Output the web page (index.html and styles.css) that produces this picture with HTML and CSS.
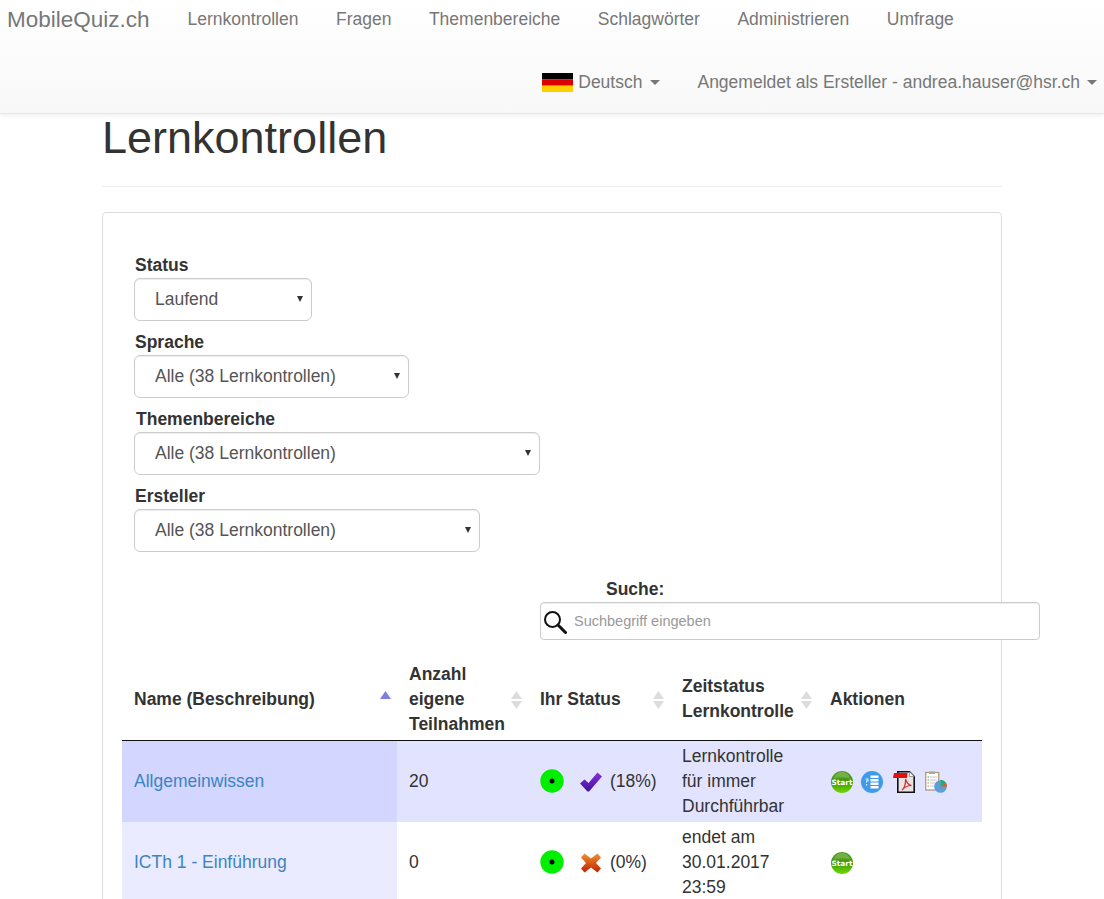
FILE: index.html
```html
<!DOCTYPE html>
<html lang="de">
<head>
<meta charset="utf-8">
<title>Lernkontrollen</title>
<link rel="stylesheet" href="styles.css">
</head>
<body>
<svg class="defs" width="0" height="0" aria-hidden="true">
  <defs>
    <linearGradient id="startGrad" x1="0" y1="0" x2="0" y2="1">
      <stop offset="0" stop-color="#5a9c28"/>
      <stop offset="0.5" stop-color="#3f9a08"/>
      <stop offset="1" stop-color="#70d800"/>
    </linearGradient>
    <linearGradient id="checkGrad" x1="0" y1="0" x2="0" y2="1">
      <stop offset="0" stop-color="#8a30d8"/>
      <stop offset="1" stop-color="#40109a"/>
    </linearGradient>
    <linearGradient id="crossGrad" x1="0" y1="0" x2="0" y2="1">
      <stop offset="0" stop-color="#f09030"/>
      <stop offset="1" stop-color="#c02000"/>
    </linearGradient>
    <symbol id="dot" viewBox="0 0 24 24">
      <circle cx="12" cy="12" r="11.7" fill="#00ee00"/>
      <circle cx="12" cy="12" r="2.5" fill="#000"/>
    </symbol>
    <symbol id="start" viewBox="0 0 22 22">
      <circle cx="11" cy="11" r="11" fill="url(#startGrad)"/>
      <path d="M3 7.500C4 3 8 1 11 1s7 2 8 6.500C15 6 7 6 3 7.500z" fill="#fff" opacity=".2"/>
      <text x="11" y="13.800" text-anchor="middle" class="start-text">Start</text>
    </symbol>
    <symbol id="sort" viewBox="0 0 11 18">
      <path d="M5.500 0L11 8H0z M0 10h11L5.500 18z" fill="#dcdcdc"/>
    </symbol>
  </defs>
</svg>

<header class="navbar">
  <nav class="nav-row">
    <a class="brand" href="#">MobileQuiz.ch</a>
    <a class="nav-link" href="#">Lernkontrollen</a>
    <a class="nav-link" href="#">Fragen</a>
    <a class="nav-link" href="#">Themenbereiche</a>
    <a class="nav-link" href="#">Schlagwörter</a>
    <a class="nav-link" href="#">Administrieren</a>
    <a class="nav-link" href="#">Umfrage</a>
  </nav>
  <nav class="nav-row nav-right">
    <a class="nav-link" href="#"><svg class="flag" viewBox="0 0 31 19" width="31" height="19"><rect width="31" height="6.400" fill="#000"/><rect y="6.400" width="31" height="6.300" fill="#dd0000"/><rect y="12.700" width="31" height="6.300" fill="#ffce00"/></svg><span>Deutsch</span><span class="caret"></span></a>
    <a class="nav-link" href="#"><span>Angemeldet als Ersteller - andrea.hauser@hsr.ch</span><span class="caret"></span></a>
  </nav>
</header>

<main class="container">
  <h1 class="page-title">Lernkontrollen</h1>
  <hr class="rule">
  <section class="card">
    <form class="filters">
      <label class="filter-label">Status</label>
      <div class="select-wrap select-status"><select class="select"><option>Laufend</option></select></div>
      <label class="filter-label">Sprache</label>
      <div class="select-wrap select-lang"><select class="select"><option>Alle (38 Lernkontrollen)</option></select></div>
      <label class="filter-label filter-label-shift">Themenbereiche</label>
      <div class="select-wrap select-topic"><select class="select"><option>Alle (38 Lernkontrollen)</option></select></div>
      <label class="filter-label">Ersteller</label>
      <div class="select-wrap select-author"><select class="select"><option>Alle (38 Lernkontrollen)</option></select></div>
    </form>

    <div class="search">
      <label class="search-label">Suche:</label>
      <div class="search-box">
        <svg class="search-icon" viewBox="0 0 24 24" width="24" height="24"><circle cx="9.500" cy="9.500" r="7.500" fill="none" stroke="#111" stroke-width="2"/><path d="M15 15l7.500 7.500" stroke="#111" stroke-width="3" stroke-linecap="round"/></svg>
        <input class="search-input" type="text" placeholder="Suchbegriff eingeben">
      </div>
    </div>

    <table class="quiz-table">
      <colgroup>
        <col class="col-name"><col class="col-count"><col class="col-status"><col class="col-time"><col class="col-actions">
      </colgroup>
      <thead>
        <tr>
          <th><div class="th-inner th-one">Name (Beschreibung)<svg class="sort-up" viewBox="0 0 11 8" width="11" height="8"><path d="M5.500 0L11 8H0z" fill="#7f7fdd"/></svg></div></th>
          <th><div class="th-inner">Anzahl<br>eigene<br>Teilnahmen<svg class="sort" width="11" height="18"><use href="#sort"/></svg></div></th>
          <th><div class="th-inner th-one">Ihr Status<svg class="sort" width="11" height="18"><use href="#sort"/></svg></div></th>
          <th><div class="th-inner th-two">Zeitstatus<br>Lernkontrolle<svg class="sort" width="11" height="18"><use href="#sort"/></svg></div></th>
          <th><div class="th-inner th-one">Aktionen</div></th>
        </tr>
      </thead>
      <tbody>
        <tr class="odd">
          <td class="sorted"><a class="link" href="#">Allgemeinwissen</a></td>
          <td>20</td>
          <td>
            <div class="status">
              <svg class="status-dot" width="24" height="24"><use href="#dot"/></svg>
              <svg class="status-mark" viewBox="0 0 22 20" width="22" height="20"><path d="M0 11.500L4.500 7.500l4 3.500L17.500 0.500l4.500 4L9 19.500H7.500z" fill="url(#checkGrad)"/></svg>
              <span>(18%)</span>
            </div>
          </td>
          <td>Lernkontrolle<br>für immer<br>Durchführbar</td>
          <td>
            <div class="actions">
              <svg class="icon" width="22" height="22"><use href="#start"/></svg>
              <svg class="icon icon-list" viewBox="0 0 22 22" width="22" height="22"><circle cx="11" cy="11" r="11" fill="#3f9ae8"/><path d="M9.500 4.500h8v2.500h-8zM9.500 8h8v2.500h-8zM9.500 11.500h8V14h-8zM9.500 15h8v2.500h-8z" fill="#fff"/><path d="M4.500 7.500h3v3H6v1H5v-2h1.500v-1h-2zM5 13h1.200v1.500H5z" fill="#e8f6ff"/></svg>
              <svg class="icon" viewBox="0 0 22 22" width="22" height="22"><path d="M4.800 0.800h11.700L21.200 5.500v15.700H4.800z" fill="#e8e4e4" stroke="#111" stroke-width="1.600"/><path d="M16.500 0.800v4.700h4.700z" fill="#fff" stroke="#888" stroke-width=".8"/><path d="M9 19c2-1 4-6 3.500-11 1 3 3 6 6 6.500-3 0-7 1.500-9.500 4.500z" fill="none" stroke="#cc3333" stroke-width="1.200"/><path d="M1 2h13.500l-.5 5H0z" fill="#e01010"/></svg>
              <svg class="icon" viewBox="0 0 22 22" width="22" height="22"><rect x="0.700" y="1.500" width="13" height="17.500" fill="#fff" stroke="#b09a78" stroke-width="1.300"/><rect x="4" y="0.500" width="6" height="2.500" fill="#a8a8a8"/><path d="M5 6h7M5 9h7M5 12h5M5 15h4" stroke="#c8c8c8"/><path d="M2.500 6h1.500M2.500 9h1.500" stroke="#3fb060"/><path d="M2.500 12h1.500M2.500 15h1.500" stroke="#d08040"/><circle cx="15.500" cy="15.500" r="6.300" fill="#5f9cd8"/><path d="M15.500 15.500V8.700a6.800 6.800 0 0 1 5.500 3z" fill="#20b070"/><path d="M15.500 15.500l5.500-3.800a6.800 6.800 0 0 1 1 3.800z" fill="#e05a20"/></svg>
            </div>
          </td>
        </tr>
        <tr class="even">
          <td class="sorted"><a class="link" href="#">ICTh 1 - Einführung</a></td>
          <td>0</td>
          <td>
            <div class="status">
              <svg class="status-dot" width="24" height="24"><use href="#dot"/></svg>
              <svg class="status-mark" viewBox="0 0 22 20" width="22" height="20"><path d="M4.500 0.500L11 5.500 17.500 0.500l3.500 4L16 10l5 5.500-3.500 4L11 14.500l-6.500 5L1 15.500 6 10 1 4.500z" fill="url(#crossGrad)"/></svg>
              <span>(0%)</span>
            </div>
          </td>
          <td>endet am<br>30.01.2017<br>23:59</td>
          <td>
            <div class="actions">
              <svg class="icon" width="22" height="22"><use href="#start"/></svg>
            </div>
          </td>
        </tr>
      </tbody>
    </table>
  </section>
</main>
</body>
</html>
```

FILE: styles.css
```css
* {
  box-sizing: border-box;
}

html,
body {
  height: 899px;
  overflow: hidden;
}

body {
  margin: 0;
  background: #fff;
  color: #333;
  font-family: "Liberation Sans", Arial, sans-serif;
  font-size: 17.5px;
  line-height: 25px;
}

.defs {
  display: block;
  height: 0;
}

.start-text {
  fill: #fff;
  font-family: "DejaVu Sans", sans-serif;
  font-size: 7.4px;
  font-weight: 700;
}

/* Navbar */
.navbar {
  height: 114px;
  padding: 7px 0 0;
  background: linear-gradient(to bottom, #fff 0, #f8f8f8 100%);
  border-bottom: 1px solid #e7e7e7;
  box-shadow: 0 1px 5px rgba(0, 0, 0, 0.08);
}

.nav-row {
  display: flex;
  align-items: center;
  height: 25px;
}

.nav-right {
  justify-content: flex-end;
  margin-top: 38px;
  padding-right: 7px;
}

.brand {
  margin-left: 7px;
  margin-right: 38px;
  color: #777;
  font-size: 22.5px;
  text-decoration: none;
}

.nav-link {
  display: flex;
  align-items: center;
  margin-right: 37.5px;
  color: #777;
  text-decoration: none;
  white-space: nowrap;
}

.nav-right .nav-link:first-child {
  margin-right: 37px;
}

.nav-right .nav-link:first-child .caret {
  margin-left: 8px;
}

.nav-right .nav-link:last-child {
  margin-right: 0;
}

.flag {
  margin-right: 5px;
}

.caret {
  width: 0;
  height: 0;
  margin-left: 7px;
  border-top: 5px solid #777;
  border-left: 5px solid transparent;
  border-right: 5px solid transparent;
}

/* Page */
.container {
  width: 900px;
  margin: 0 0 0 102px;
}

.page-title {
  height: 72px;
  margin: 0;
  color: #333;
  font-size: 45px;
  font-weight: 500;
  line-height: 48px;
}

.rule {
  margin: 0 0 25px;
  border: 0;
  border-top: 1px solid #eee;
}

.card {
  height: 800px;
  padding: 19px;
  border: 1px solid #ddd;
  border-radius: 4px;
}

/* Filters */
.filters {
  display: flex;
  flex-direction: column;
  align-items: flex-start;
  padding: 20px 0 0 12px;
}

.filter-label {
  height: 26px;
  padding-top: 1px;
  padding-left: 1px;
  font-weight: 700;
  line-height: 25px;
}

.filter-label-shift {
  padding-left: 2px;
}

.select-wrap {
  position: relative;
  height: 43px;
  margin-bottom: 8px;
}

.select-wrap::after {
  content: "";
  position: absolute;
  top: 18px;
  right: 9px;
  width: 0;
  height: 0;
  border-top: 6px solid #333;
  border-left: 3.5px solid transparent;
  border-right: 3.5px solid transparent;
  pointer-events: none;
}

.select {
  display: block;
  width: 100%;
  height: 43px;
  padding: 0 24px 2px 20px;
  border: 1px solid #ccc;
  border-radius: 6px;
  background-color: #fff;
  color: #555;
  font-family: inherit;
  font-size: 17.5px;
  box-shadow: inset 0 1px 1px rgba(0, 0, 0, 0.075);
  appearance: none;
  -webkit-appearance: none;
}

.select-status { width: 178px; }
.select-lang { width: 275px; }
.select-topic { width: 406px; }
.select-author { width: 346px; }

/* Search */
.search {
  width: 500px;
  margin: 16px 0 0 418px;
}

.search-label {
  display: block;
  height: 26px;
  padding-top: 1px;
  margin-left: 66px;
  font-weight: 700;
}

.search-box {
  position: relative;
  height: 38px;
}

.search-icon {
  position: absolute;
  left: 3px;
  top: 8px;
}

.search-input {
  display: block;
  width: 100%;
  height: 38px;
  padding: 0 12px 0 33px;
  border: 1px solid #ccc;
  border-radius: 4px;
  color: #555;
  font-family: inherit;
  font-size: 14.500px;
  box-shadow: inset 0 1px 1px rgba(0, 0, 0, 0.075);
}

.search-input::placeholder {
  color: #999;
  opacity: 1;
}

/* Table */
.quiz-table {
  width: 860px;
  margin-top: 18px;
  border-collapse: separate;
  border-spacing: 0;
  table-layout: fixed;
}

.col-name { width: 275px; }
.col-count { width: 131px; }
.col-status { width: 142px; }
.col-time { width: 148px; }
.col-actions { width: 164px; }

.quiz-table th {
  padding: 4px 0 3px 12px;
  border-bottom: 1px solid #111;
  text-align: left;
  vertical-align: top;
}

.th-inner {
  position: relative;
  height: 75px;
  white-space: nowrap;
}

.th-one {
  padding-top: 25px;
}

.th-two {
  padding-top: 12px;
}

.sort,
.sort-up {
  position: absolute;
  top: 29px;
  right: 6px;
}

.quiz-table td {
  height: 81px;
  padding: 3px 12px;
  vertical-align: middle;
}

.odd td {
  background: #e2e4ff;
}

.odd td.sorted {
  background: #d3d6ff;
}

.even td.sorted {
  background: #eaebff;
}

.link {
  color: #3c84c4;
  text-decoration: none;
}

.status {
  display: flex;
  align-items: center;
}

.status-dot {
  flex: none;
  margin-top: -2px;
}

.status-mark {
  flex: none;
  margin-left: 16px;
  margin-right: 8px;
}

.actions {
  display: flex;
  align-items: center;
  gap: 10px;
  margin-left: 1px;
  padding-top: 1px;
}

.icon-list {
  margin-left: -2px;
}
```
